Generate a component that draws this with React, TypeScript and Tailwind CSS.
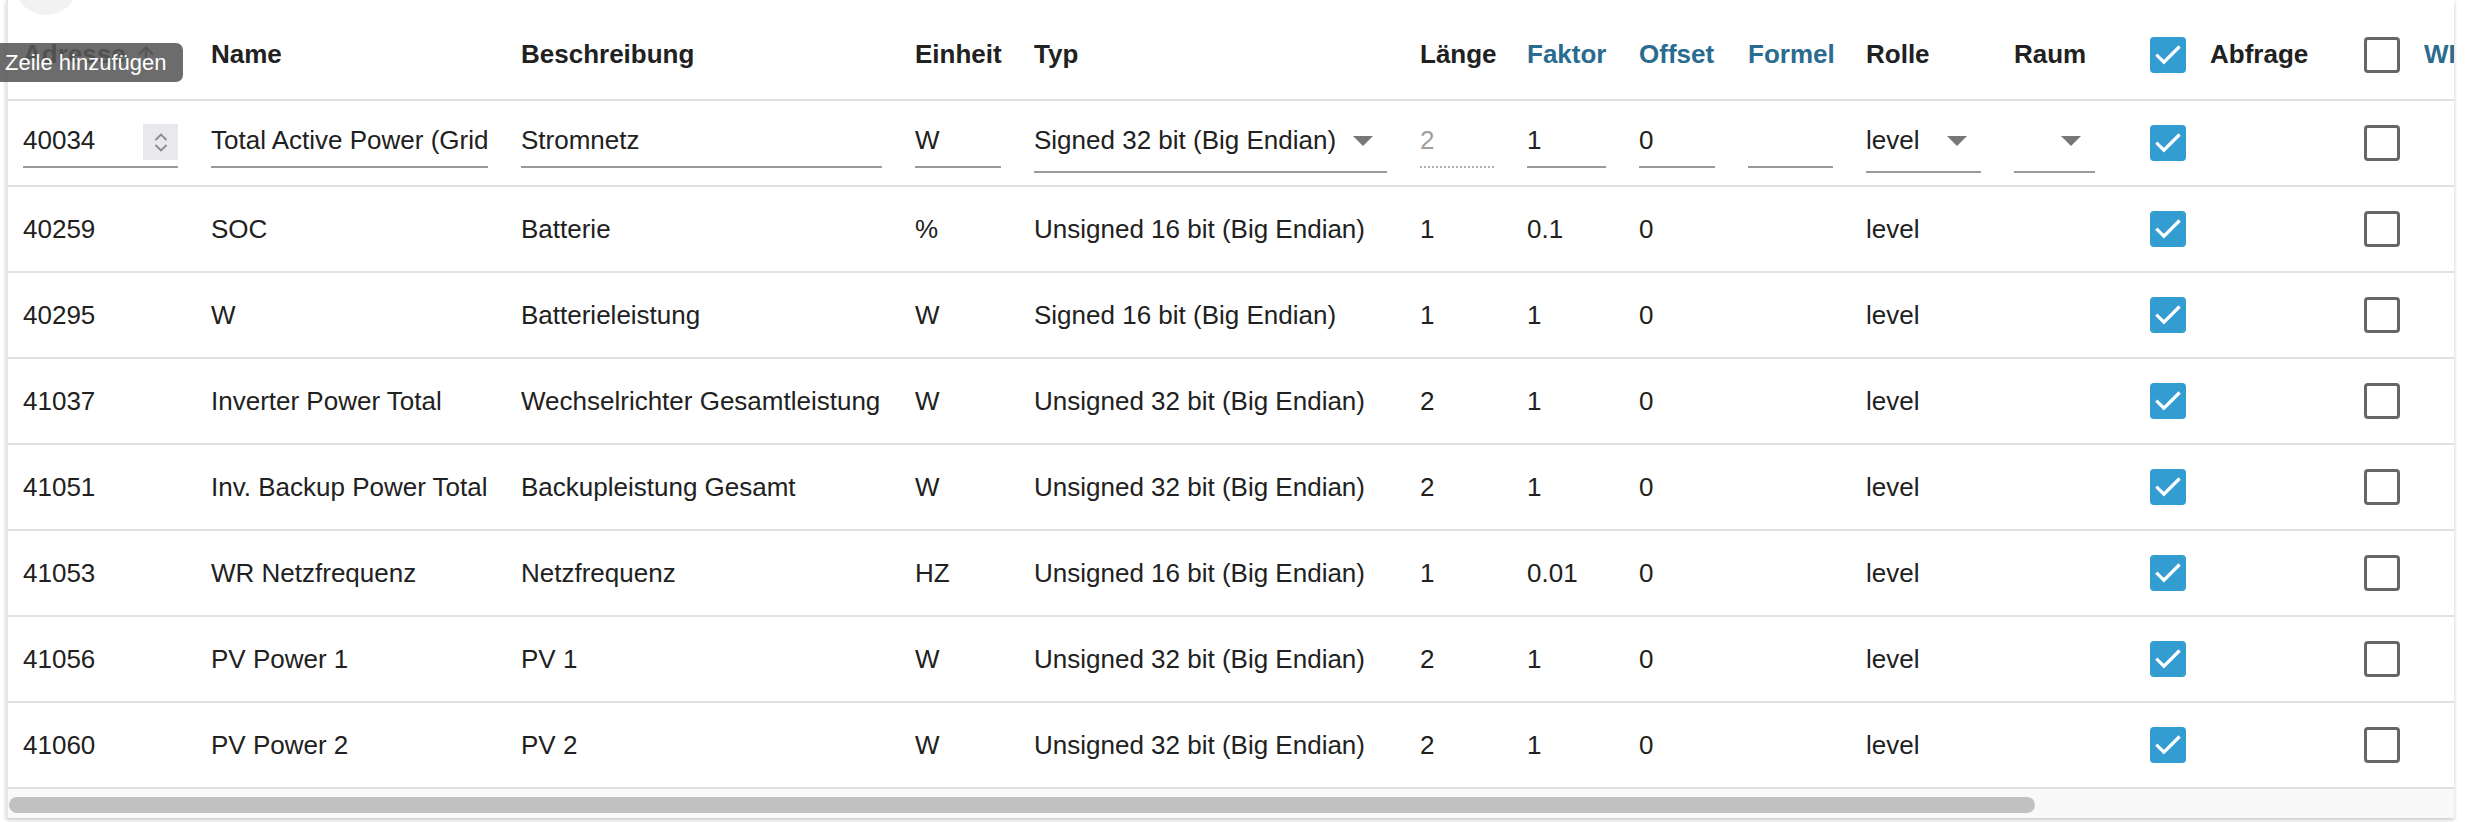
import React from "react";

// column template shared by header and rows
const cols =
  "grid grid-cols-[188px_310px_394px_119px_386px_107px_112px_109px_118px_148px_136px_214px_200px]";

const cell = "flex items-center pl-[15px] pr-[18px] whitespace-nowrap overflow-hidden";

interface Row {
  address: string;
  name: string;
  desc: string;
  unit: string;
  type: string;
  len: string;
  factor: string;
  offset: string;
  role: string;
}

const rows: Row[] = [
  { address: "40259", name: "SOC", desc: "Batterie", unit: "%", type: "Unsigned 16 bit (Big Endian)", len: "1", factor: "0.1", offset: "0", role: "level" },
  { address: "40295", name: "W", desc: "Batterieleistung", unit: "W", type: "Signed 16 bit (Big Endian)", len: "1", factor: "1", offset: "0", role: "level" },
  { address: "41037", name: "Inverter Power Total", desc: "Wechselrichter Gesamtleistung", unit: "W", type: "Unsigned 32 bit (Big Endian)", len: "2", factor: "1", offset: "0", role: "level" },
  { address: "41051", name: "Inv. Backup Power Total", desc: "Backupleistung Gesamt", unit: "W", type: "Unsigned 32 bit (Big Endian)", len: "2", factor: "1", offset: "0", role: "level" },
  { address: "41053", name: "WR Netzfrequenz", desc: "Netzfrequenz", unit: "HZ", type: "Unsigned 16 bit (Big Endian)", len: "1", factor: "0.01", offset: "0", role: "level" },
  { address: "41056", name: "PV Power 1", desc: "PV 1", unit: "W", type: "Unsigned 32 bit (Big Endian)", len: "2", factor: "1", offset: "0", role: "level" },
  { address: "41060", name: "PV Power 2", desc: "PV 2", unit: "W", type: "Unsigned 32 bit (Big Endian)", len: "2", factor: "1", offset: "0", role: "level" },
];

const Checkbox = ({ checked }: { checked: boolean }) =>
  checked ? (
    <div className="w-[36px] h-[36px] shrink-0 rounded-[4px] bg-[#339cd0] flex items-center justify-center">
      <svg width="34" height="34" viewBox="0 0 24 24" fill="none">
        <path d="M4.6 12.6l4.5 4.5L19.4 6.8" stroke="white" strokeWidth="2.3" strokeLinecap="square" />
      </svg>
    </div>
  ) : (
    <div className="w-[36px] h-[36px] shrink-0 rounded-[4px] border-[3px] border-[#666666] bg-white" />
  );

const Caret = () => (
  <svg width="20" height="10" viewBox="0 0 20 10" className="shrink-0 mr-[14px]">
    <path d="M0 0h20L10 10z" fill="#777777" />
  </svg>
);

const Field = ({ value, children }: { value: string; children?: React.ReactNode }) => (
  <div className="w-full h-[45px] pb-[8px] border-b-2 border-[#9a9a9a] flex items-center justify-between overflow-hidden">
    <span className="overflow-hidden">{value}</span>
    {children}
  </div>
);

const SelectField = ({ value }: { value: string }) => (
  <div className="w-full h-[50px] pb-[13px] border-b-2 border-[#9a9a9a] flex items-center justify-between">
    <span>{value}</span>
    <Caret />
  </div>
);

const App = () => {
  const editCell = "flex items-start pt-[22px] pl-[15px] pr-[18px] whitespace-nowrap overflow-hidden";

  return (
    <div className="relative w-[2472px] h-[822px] bg-white overflow-hidden font-['Liberation_Sans',Arial,sans-serif] text-[26px] text-[#212121]">
      <div className="ml-[6px] w-[2448px] bg-white overflow-hidden border-l-2 border-[#e8e8e8] shadow-[0_2px_4px_rgba(0,0,0,0.22)]">
        {/* header */}
        <div className={`${cols} h-[101px] pt-[10px] border-b-2 border-[#e0e0e0] font-bold`}>
          <div className={`${cell} gap-[8px]`}>
            Adresse
            <svg width="24" height="24" viewBox="0 0 24 24" className="shrink-0">
              <path d="M12 20V5M5 11.5l7-7 7 7" stroke="#555" strokeWidth="2.4" fill="none" />
            </svg>
          </div>
          <div className={cell}>Name</div>
          <div className={cell}>Beschreibung</div>
          <div className={cell}>Einheit</div>
          <div className={cell}>Typ</div>
          <div className={cell}>Länge</div>
          <div className={`${cell} text-[#2a6b90]`}>Faktor</div>
          <div className={`${cell} text-[#2a6b90]`}>Offset</div>
          <div className={`${cell} text-[#2a6b90]`}>Formel</div>
          <div className={cell}>Rolle</div>
          <div className={cell}>Raum</div>
          <div className={`${cell} gap-[24px]`}>
            <Checkbox checked />
            Abfrage
          </div>
          <div className={`${cell} gap-[24px] text-[#2a6b90]`}>
            <Checkbox checked={false} />
            WP
          </div>
        </div>

        {/* editable first row */}
        <div className={`${cols} h-[86px] border-b-2 border-[#e0e0e0]`}>
          <div className={editCell}>
            <div className="w-full h-[45px] pb-[8px] border-b-2 border-[#9a9a9a] flex items-start justify-between">
              <span className="h-[35px] flex items-center">40034</span>
              <div className="w-[35px] h-[36px] mt-[1px] bg-[#e9e9ed] flex flex-col items-center justify-center gap-[3px]">
                <svg width="14" height="8" viewBox="0 0 14 8">
                  <path d="M1.5 7L7 1.5 12.5 7" stroke="#8a8a8e" strokeWidth="1.8" fill="none" />
                </svg>
                <svg width="14" height="8" viewBox="0 0 14 8">
                  <path d="M1.5 1L7 6.5 12.5 1" stroke="#8a8a8e" strokeWidth="1.8" fill="none" />
                </svg>
              </div>
            </div>
          </div>
          <div className={editCell}>
            <Field value="Total Active Power (Grid)" />
          </div>
          <div className={editCell}>
            <Field value="Stromnetz" />
          </div>
          <div className={editCell}>
            <Field value="W" />
          </div>
          <div className={editCell}>
            <SelectField value="Signed 32 bit (Big Endian)" />
          </div>
          <div className={editCell}>
            <div className="w-full h-[45px] pb-[8px] border-b-2 border-dotted border-[#b0b0b0] flex items-center text-[#9e9e9e]">
              2
            </div>
          </div>
          <div className={editCell}>
            <Field value="1" />
          </div>
          <div className={editCell}>
            <Field value="0" />
          </div>
          <div className={editCell}>
            <Field value="" />
          </div>
          <div className={editCell}>
            <SelectField value="level" />
          </div>
          <div className="flex items-start pt-[22px] pl-[15px] pr-[40px]">
            <SelectField value="" />
          </div>
          <div className={cell}>
            <Checkbox checked />
          </div>
          <div className={cell}>
            <Checkbox checked={false} />
          </div>
        </div>

        {rows.map((r) => (
          <div key={r.address} className={`${cols} h-[86px] border-b-2 border-[#e0e0e0]`}>
            <div className={cell}>{r.address}</div>
            <div className={cell}>{r.name}</div>
            <div className={cell}>{r.desc}</div>
            <div className={cell}>{r.unit}</div>
            <div className={cell}>{r.type}</div>
            <div className={cell}>{r.len}</div>
            <div className={cell}>{r.factor}</div>
            <div className={cell}>{r.offset}</div>
            <div className={cell}></div>
            <div className={cell}>{r.role}</div>
            <div className={cell}></div>
            <div className={cell}>
              <Checkbox checked />
            </div>
            <div className={cell}>
              <Checkbox checked={false} />
            </div>
          </div>
        ))}

        {/* horizontal scrollbar */}
        <div className="h-[29px] bg-[#f9f9f9] pt-[8px] pl-[1px]">
          <div className="w-[2026px] h-[16px] rounded-full bg-[#c1c1c1]" />
        </div>
      </div>

      {/* round button peeking in at the top */}
      <div className="absolute left-[14px] top-[-49px] w-[64px] h-[64px] rounded-full bg-[#f2f2f2]" />

      {/* tooltip */}
      <div className="absolute left-0 top-[43px] w-[183px] h-[39px] rounded-r-[7px] bg-[rgba(88,88,88,0.88)] text-white text-[22px] font-normal pl-[5px] flex items-center whitespace-nowrap">
        Zeile hinzufügen
      </div>
    </div>
  );
};

export default App;
